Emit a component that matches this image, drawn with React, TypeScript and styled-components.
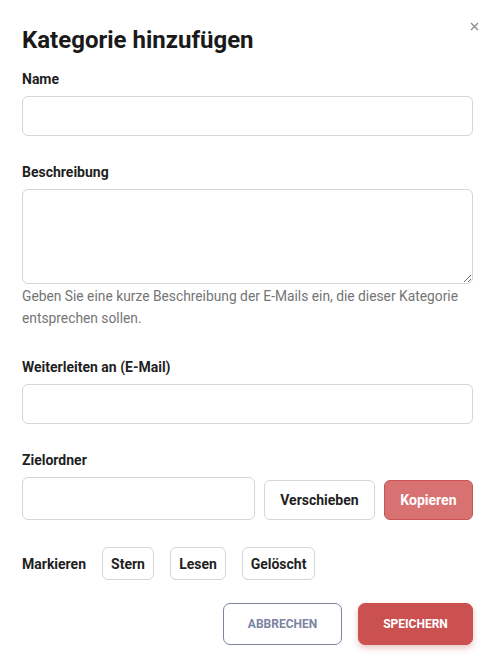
import React from 'react';
import styled, { createGlobalStyle } from 'styled-components';

const GlobalStyle = createGlobalStyle`
  * { box-sizing: border-box; }
  body {
    margin: 0;
    background: #ffffff;
    font-family: Roboto, "Liberation Sans", Arial, sans-serif;
    color: #1f1f1f;
  }
`;

const Dialog = styled.div`
  position: relative;
  width: 494px;
  padding: 24px 21px 20px 22px;
  background: #ffffff;
`;

const CloseButton = styled.button`
  position: absolute;
  top: 17px;
  right: 11px;
  border: none;
  background: none;
  padding: 0;
  width: 18px;
  height: 18px;
  display: flex;
  align-items: center;
  justify-content: center;
  cursor: pointer;
`;

const Title = styled.h2`
  margin: 0 0 13px;
  font-size: 24px;
  line-height: 32px;
  font-weight: 700;
  color: #1a1a1a;
`;

const Field = styled.div<{ $gap?: number }>`
  display: flex;
  flex-direction: column;
  margin-bottom: ${(p) => p.$gap ?? 26}px;
`;

const Label = styled.label`
  font-size: 14px;
  line-height: 20px;
  font-weight: 700;
  color: #1f1f1f;
  margin-bottom: 7px;
`;

const TextInput = styled.input<{ $height?: number }>`
  width: 100%;
  height: ${(p) => p.$height ?? 40}px;
  border: 1px solid #d6d6da;
  border-radius: 6px;
  padding: 0 12px;
  font: inherit;
  font-size: 14px;
  outline: none;
  background: #fff;
`;

const TextArea = styled.textarea`
  width: 100%;
  height: 95px;
  border: 1px solid #d6d6da;
  border-radius: 6px;
  padding: 10px 12px;
  font: inherit;
  font-size: 14px;
  outline: none;
  resize: vertical;
  display: block;
`;

const Hint = styled.p`
  margin: 1px 0 0;
  font-size: 13.8px;
  line-height: 22px;
  color: #757575;
`;

const FolderRow = styled.div`
  display: flex;
  align-items: flex-end;
  gap: 9px;
`;

const FolderInput = styled(TextInput)`
  flex: 0 0 233px;
`;

const ActionButton = styled.button<{ $primary?: boolean; $width: number }>`
  width: ${(p) => p.$width}px;
  height: 40px;
  border-radius: 6px;
  border: 1px solid ${(p) => (p.$primary ? '#c95454' : '#d6d6da')};
  background: ${(p) => (p.$primary ? '#d87171' : '#ffffff')};
  color: ${(p) => (p.$primary ? '#ffffff' : '#1f1f1f')};
  font: inherit;
  font-size: 14px;
  font-weight: 700;
  cursor: pointer;
`;

const MarkRow = styled.div`
  display: flex;
  align-items: center;
  gap: 16px;
  margin-bottom: 23px;
`;

const MarkLabel = styled.span`
  font-size: 14px;
  font-weight: 700;
  color: #1f1f1f;
`;

const Chip = styled.button<{ $width: number }>`
  width: ${(p) => p.$width}px;
  height: 33px;
  border: 1px solid #d6d6da;
  border-radius: 6px;
  background: #fff;
  font: inherit;
  font-size: 14px;
  font-weight: 700;
  color: #1f1f1f;
  cursor: pointer;
`;

const Footer = styled.div`
  display: flex;
  justify-content: flex-end;
  gap: 16px;
`;

const FooterButton = styled.button<{ $primary?: boolean; $width: number }>`
  width: ${(p) => p.$width}px;
  height: 42px;
  border-radius: 7px;
  font: inherit;
  font-size: 12px;
  font-weight: 700;
  text-transform: uppercase;
  cursor: pointer;
  border: 1px solid ${(p) => (p.$primary ? '#cb5151' : '#7c83a3')};
  background: ${(p) => (p.$primary ? '#cb5151' : '#ffffff')};
  color: ${(p) => (p.$primary ? '#ffffff' : '#7c83a3')};
  box-shadow: ${(p) => (p.$primary ? '0 3px 6px rgba(180, 60, 60, 0.3)' : 'none')};
`;

export default function App() {
  return (
    <>
      <GlobalStyle />
      <Dialog>
        <CloseButton aria-label="Schließen">
          <svg width="9" height="9" viewBox="0 0 9 9">
            <path d="M1 1 L8 8 M8 1 L1 8" stroke="#8a8a8a" strokeWidth="1.3" />
          </svg>
        </CloseButton>
        <Title>Kategorie hinzufügen</Title>

        <Field>
          <Label htmlFor="name">Name</Label>
          <TextInput id="name" />
        </Field>

        <Field $gap={28}>
          <Label htmlFor="desc">Beschreibung</Label>
          <TextArea id="desc" />
          <Hint>
            Geben Sie eine kurze Beschreibung der E-Mails ein, die dieser Kategorie
            entsprechen sollen.
          </Hint>
        </Field>

        <Field>
          <Label htmlFor="forward">Weiterleiten an (E-Mail)</Label>
          <TextInput id="forward" />
        </Field>

        <Field $gap={27}>
          <Label htmlFor="folder">Zielordner</Label>
          <FolderRow>
            <FolderInput id="folder" $height={43} />
            <ActionButton $width={112}>Verschieben</ActionButton>
            <ActionButton $primary $width={90}>Kopieren</ActionButton>
          </FolderRow>
        </Field>

        <MarkRow>
          <MarkLabel>Markieren</MarkLabel>
          <Chip $width={52}>Stern</Chip>
          <Chip $width={56}>Lesen</Chip>
          <Chip $width={73}>Gelöscht</Chip>
        </MarkRow>

        <Footer>
          <FooterButton $width={119}>Abbrechen</FooterButton>
          <FooterButton $primary $width={115}>Speichern</FooterButton>
        </Footer>
      </Dialog>
    </>
  );
}
